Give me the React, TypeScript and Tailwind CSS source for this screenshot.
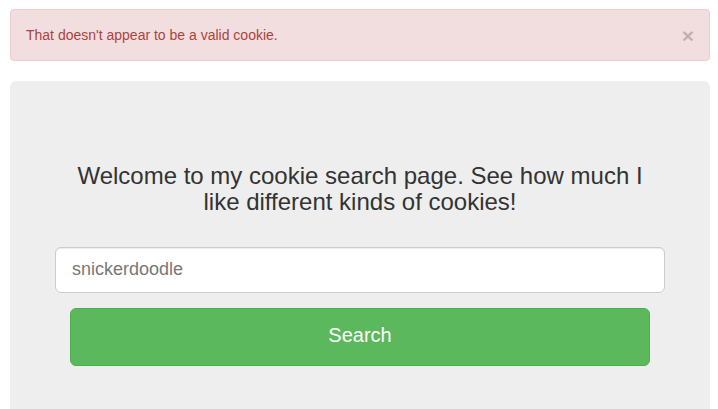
import React, { useState } from 'react';

export default function App() {
  const [value, setValue] = useState('');
  const [showAlert, setShowAlert] = useState(true);

  return (
    <div className="h-screen overflow-hidden bg-white pl-[10px] pr-[8px] pt-[9px] font-['Liberation_Sans',Arial,sans-serif] text-[#333]">
      {/* alert */}
      {showAlert && (
        <div className="mb-[20px] flex h-[52px] items-center justify-between rounded-[4px] border border-[#ebccd1] bg-[#f2dede] pl-[15px] pr-[15px] text-[14px] text-[#a94442]">
          <span>That doesn't appear to be a valid cookie.</span>
          <button
            onClick={() => setShowAlert(false)}
            className="text-[21px] font-bold leading-none text-black opacity-20"
          >
            ×
          </button>
        </div>
      )}

      {/* jumbotron */}
      <div className="rounded-[6px] bg-[#eeeeee] px-[45px] pb-[48px] pt-[82px]">
        <h3 className="mx-auto mb-[31px] max-w-[580px] text-center text-[24px] leading-[26.4px] text-[#333]">
          Welcome to my cookie search page. See how much I like different kinds of cookies!
        </h3>
        <input
          value={value}
          onChange={(e) => setValue(e.target.value)}
          placeholder="snickerdoodle"
          className="block h-[46px] w-full rounded-[6px] border border-[#ccc] bg-white px-[16px] text-[18px] text-[#555] shadow-[inset_0_1px_1px_rgba(0,0,0,0.075)] outline-none placeholder:text-[#777]"
        />
        <div className="px-[15px] pt-[15px]">
          <button className="h-[58px] w-full rounded-[6px] border border-[#4cae4c] bg-[#5cb85c] pb-[3px] text-[20px] leading-none text-white">
            Search
          </button>
        </div>
      </div>
    </div>
  );
}
